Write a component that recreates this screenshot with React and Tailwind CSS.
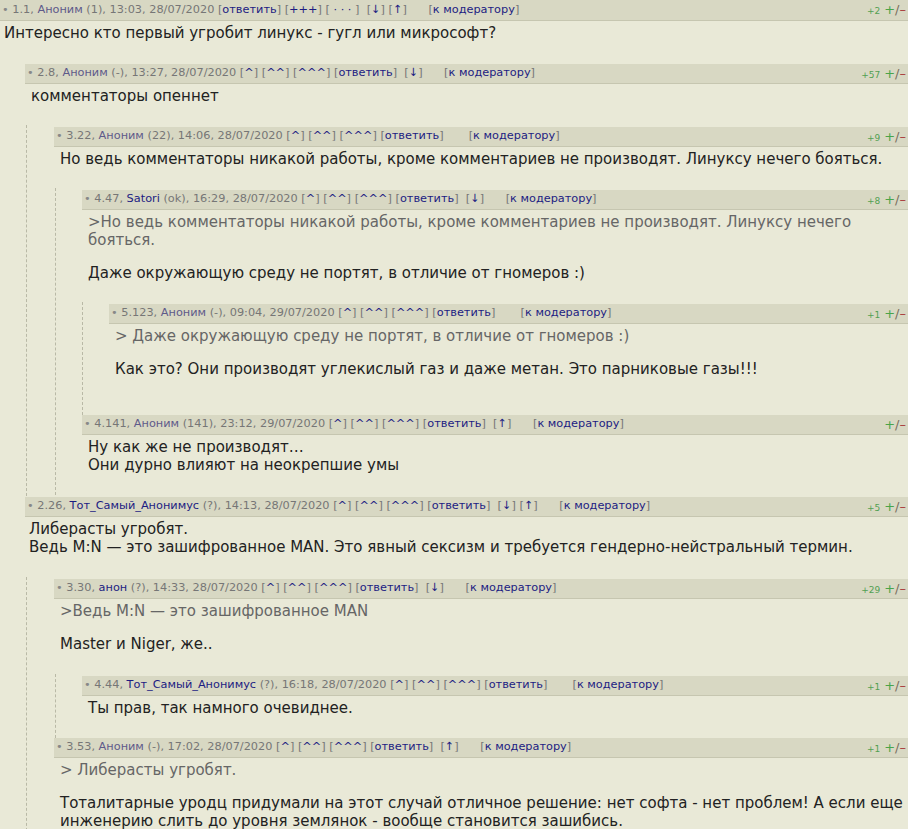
import React from "react";

const tree = [
  {
    n: "1.1", name: "Аноним", reg: false, score: "1", time: "13:03, 28/07/2020", top: true, arrows: ["↓", "↑"], plus: "+2",
    body: [{ t: "Интересно кто первый угробит линукс - гугл или микрософт?" }],
    children: [
      {
        n: "2.8", name: "Аноним", reg: false, score: "-", time: "13:27, 28/07/2020", arrows: ["↓"], plus: "+57",
        body: [{ t: "комментаторы опеннет" }],
        children: [
          {
            n: "3.22", name: "Аноним", reg: false, score: "22", time: "14:06, 28/07/2020", arrows: [], plus: "+9",
            body: [{ t: "Но ведь комментаторы никакой работы, кроме комментариев не производят. Линуксу нечего бояться." }],
            children: [
              {
                n: "4.47", name: "Satori", reg: true, score: "ok", time: "16:29, 28/07/2020", arrows: ["↓"], plus: "+8",
                body: [
                  { t: ">Но ведь комментаторы никакой работы, кроме комментариев не производят. Линуксу нечего бояться.", q: true },
                  { t: "Даже окружающую среду не портят, в отличие от гномеров :)" },
                ],
                children: [
                  {
                    n: "5.123", name: "Аноним", reg: false, score: "-", time: "09:04, 29/07/2020", arrows: [], plus: "+1",
                    trailing: true,
                    body: [
                      { t: "> Даже окружающую среду не портят, в отличие от гномеров :)", q: true },
                      { t: "Как это? Они производят углекислый газ и даже метан. Это парниковые газы!!!" },
                    ],
                  },
                ],
              },
              {
                n: "4.141", name: "Аноним", reg: false, score: "141", time: "23:12, 29/07/2020", arrows: ["↑"], plus: "",
                body: [{ t: "Ну как же не производят…\nОни дурно влияют на неокрепшие умы" }],
              },
            ],
          },
        ],
        wrapExtra: true,
      },
      {
        n: "2.26", name: "Тот_Самый_Анонимус", reg: true, score: "?", time: "14:13, 28/07/2020", arrows: ["↓", "↑"], plus: "+5",
        bodyPl: "pl-[4px]",
        pb: "pb-[21px]",
        body: [{ t: "Либерасты угробят.\nВедь M:N — это зашифрованное MAN. Это явный сексизм и требуется гендерно-нейстральный термин." }],
        children: [
          {
            n: "3.30", name: "анон", reg: true, score: "?", time: "14:33, 28/07/2020", arrows: ["↓"], plus: "+29",
            pb: "pb-[21px]",
            body: [
              { t: ">Ведь M:N — это зашифрованное MAN", q: true },
              { t: "Master и Niger, же.." },
            ],
            children: [
              {
                n: "4.44", name: "Тот_Самый_Анонимус", reg: true, score: "?", time: "16:18, 28/07/2020", arrows: [], plus: "+1",
                body: [{ t: "Ты прав, так намного очевиднее." }],
              },
            ],
          },
          {
            n: "3.53", name: "Аноним", reg: false, score: "-", time: "17:02, 28/07/2020", arrows: ["↑"], plus: "+1",
            body: [
              { t: "> Либерасты угробят.", q: true },
              { t: "Тоталитарные уродц придумали на этот случай отличное решение: нет софта - нет проблем! А если еще инженерию слить до уровня землянок - вообще становится зашибись." },
            ],
          },
        ],
      },
    ],
  },
];

const wrapCls = {
  1: "pl-[25px] pt-[2px]",
  2: "ml-px border-l border-dashed border-[#b9b9a6] pl-[27px] pt-[2px] pb-[1px]",
  3: "ml-px border-l border-dashed border-[#b9b9a6] pl-[26px] pt-[2px] pb-[1px]",
  4: "border-l border-dashed border-[#b9b9a6] pl-[26px] pt-[2px] pb-[1px]",
};

function Lk({ children }) {
  return (
    <>
      [<span className="text-[#1c1c82]">{children}</span>]
    </>
  );
}

function Header({ c, level }) {
  const h = level === 1 ? "h-[21px]" : "h-[20px]";
  return (
    <div className={`flex items-center justify-between ${h} bg-[#d8d8c3] border-b border-[#c6c6b0] pl-[2px] pr-[2px] text-[11.3px] text-[#767676] whitespace-nowrap overflow-hidden`}>
      <div>
        <span className="text-[#888]">•</span> {c.n},{" "}
        <span className={c.reg ? "text-[#1c1c82]" : "text-[#5e5a8a]"}>{c.name}</span> ({c.score}), {c.time}{" "}
        {c.top ? (
          <>
            <Lk>ответить</Lk> <Lk>+++</Lk> [ <span className="text-[#1c1c82]">· · ·</span> ]
          </>
        ) : (
          <>
            <Lk>^</Lk> <Lk>^^</Lk> <Lk>^^^</Lk> <Lk>ответить</Lk>
          </>
        )}
        {c.arrows.length > 0 ? (
          <>
            {"\u00a0\u00a0"}
            {c.arrows.map((a, i) => (
              <React.Fragment key={i}>
                {i > 0 ? " " : ""}
                <Lk>{a}</Lk>
              </React.Fragment>
            ))}
            {"\u00a0\u00a0\u00a0\u00a0\u00a0\u00a0"}
          </>
        ) : (
          "\u00a0\u00a0\u00a0\u00a0\u00a0\u00a0\u00a0"
        )}
        <Lk>к модератору</Lk>
      </div>
      <div className="flex items-baseline gap-[4px]">
        {c.plus ? <span className="text-[9px] text-[#52a052]">{c.plus}</span> : null}
        <span className="text-[13px]">
          <span className="text-[#4aa44a]">+</span>
          <span className="text-[#7a6e5e]">/</span>
          <span className="text-[#a83a3a]">–</span>
        </span>
      </div>
    </div>
  );
}

function Comment({ c, level }) {
  const pl = level === 1 ? "pl-[4px]" : c.bodyPl || "pl-[6px]";
  const pb = c.pb || "pb-[20px]";
  return (
    <div>
      <Header c={c} level={level} />
      <div className={`pt-[3px] ${pb} ${pl} text-[15px] leading-[18px] text-[#222]`}>
        {c.body.map((p, i) => (
          <div key={i} className={`${i > 0 ? "mt-[15px]" : ""} ${p.q ? "text-[#666]" : ""} whitespace-pre-line`}>
            {p.t}
          </div>
        ))}
        {c.trailing ? <div className="h-[16px]" /> : null}
      </div>
      {c.children && c.children.length > 0 ? (
        <div className={`${wrapCls[level]} ${c.wrapExtra ? "mb-px" : ""}`}>
          {c.children.map((ch) => (
            <Comment key={ch.n} c={ch} level={level + 1} />
          ))}
        </div>
      ) : null}
    </div>
  );
}

export default function App() {
  return (
    <div className="min-h-screen bg-[#e9e9d7] font-['DejaVu_Sans',sans-serif] overflow-hidden">
      {tree.map((c) => (
        <Comment key={c.n} c={c} level={1} />
      ))}
    </div>
  );
}
